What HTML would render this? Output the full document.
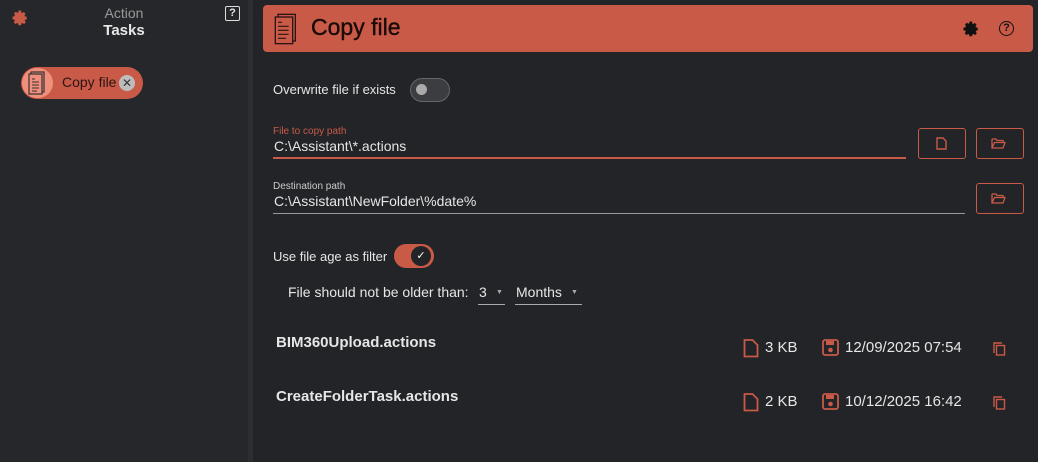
<html><head><style>
body{margin:0;width:1038px;height:462px;background:#222427;font-family:"Liberation Sans",sans-serif;position:relative;overflow:hidden;color:#e6e6e6}
.a{position:absolute}
.btn{position:absolute;border:1.5px solid #c95a48;border-radius:3px;box-sizing:border-box}
</style></head><body>
<div class="a" style="left:0;top:0;width:248px;height:462px;background:#25272a"></div>
<div class="a" style="left:248px;top:0;width:5px;height:462px;background:#2c2e31"></div>
<svg class="a" style="left:11px;top:9px" width="18" height="18" viewBox="0 0 24 24"><path fill="#c95a48" d="M12 8.5a3.5 3.5 0 1 0 0 7 3.5 3.5 0 0 0 0-7zm9 5.2v-3.4l-2.4-.5-.6-1.5 1.4-2-2.4-2.4-2 1.4-1.5-.6L13.7 2h-3.4l-.5 2.4-1.5.6-2-1.4-2.4 2.4 1.4 2-.6 1.5L2 10.3v3.4l2.4.5.6 1.5-1.4 2 2.4 2.4 2-1.4 1.5.6.5 2.4h3.4l.5-2.4 1.5-.6 2 1.4 2.4-2.4-1.4-2 .6-1.5z"/></svg>
<div class="a" style="left:0;width:248px;top:5px;text-align:center;font-size:14px;color:#9a9a9a">Action</div>
<div class="a" style="left:0;width:248px;top:22px;text-align:center;font-size:15px;font-weight:bold;color:#e8e8e8">Tasks</div>
<div class="a" style="left:225px;top:6px;width:13px;height:13px;border:1.5px solid #ddd;border-radius:2px;font-size:11px;font-weight:bold;text-align:center;line-height:13px">?</div>
<div class="a" style="left:21px;top:67px;width:122px;height:32px;border-radius:16px;background:#c95a48"></div>
<div class="a" style="left:22px;top:68px;width:31px;height:30px;border-radius:15px;background:#f0907c"></div>
<svg class="a" style="left:28px;top:71px" width="18" height="24" viewBox="0 0 18 24"><rect x="3" y="1" width="13" height="20" fill="none" stroke="#333" stroke-width="1.2"/><rect x="1" y="3" width="13" height="20" fill="#f0907c" stroke="#333" stroke-width="1.2"/><path d="M4 8h3M4 11h7M4 14h7M4 17h7M4 20h5" stroke="#333" stroke-width="1"/></svg>
<div class="a" style="left:62px;top:74px;font-size:14px;color:#2a1512">Copy file</div>
<div class="a" style="left:119px;top:75px;width:16px;height:16px;border-radius:8px;background:#bdbdbd;color:#333;font-size:12px;text-align:center;line-height:16px">✕</div>

<div class="a" style="left:263px;top:5px;width:770px;height:47px;background:#c95a48;border-radius:4px"></div>
<svg class="a" style="left:274px;top:13px" width="24" height="32" viewBox="0 0 18 24"><rect x="3" y="1" width="13" height="20" fill="none" stroke="#2a1512" stroke-width="1"/><rect x="1" y="3" width="13" height="20" fill="#c95a48" stroke="#2a1512" stroke-width="1"/><path d="M3 7h3M3 10h8M3 13h8M3 16h8M3 19h6" stroke="#2a1512" stroke-width=".9"/></svg>
<div class="a" style="left:311px;top:14px;font-size:23px;color:#1a0a08;-webkit-text-stroke:0.4px #1a0a08">Copy file</div>
<svg class="a" style="left:962px;top:20px" width="18" height="18" viewBox="0 0 24 24"><path fill="#111" d="M12 8.5a3.5 3.5 0 1 0 0 7 3.5 3.5 0 0 0 0-7zm9 5.2v-3.4l-2.4-.5-.6-1.5 1.4-2-2.4-2.4-2 1.4-1.5-.6L13.7 2h-3.4l-.5 2.4-1.5.6-2-1.4-2.4 2.4 1.4 2-.6 1.5L2 10.3v3.4l2.4.5.6 1.5-1.4 2 2.4 2.4 2-1.4 1.5.6.5 2.4h3.4l.5-2.4 1.5-.6 2 1.4 2.4-2.4-1.4-2 .6-1.5z"/></svg>
<div class="a" style="left:999px;top:21px;width:13px;height:13px;border:1.5px solid #111;border-radius:50%;font-size:11px;font-weight:bold;color:#111;text-align:center;line-height:13px">?</div>

<div class="a" style="left:273px;top:82px;font-size:13px">Overwrite file if exists</div>
<div class="a" style="left:410px;top:78px;width:38px;height:22px;border-radius:12px;background:#3b3d40;border:1px solid #666"></div>
<div class="a" style="left:416px;top:84px;width:11px;height:11px;border-radius:50%;background:#aaa"></div>

<div class="a" style="left:273px;top:126px;font-size:10px;color:#c95a48">File to copy path</div>
<div class="a" style="left:274px;top:138px;font-size:14px">C:\Assistant\*.actions</div>
<div class="a" style="left:273px;top:157px;width:633px;height:2px;background:#c95a48"></div>
<div class="btn" style="left:918px;top:128px;width:48px;height:31px"></div>
<svg class="a" style="left:936px;top:137px" width="11" height="13" viewBox="0 0 11 13"><path d="M1 1h6l3 3v8H1z" fill="none" stroke="#c95a48" stroke-width="1.4"/></svg>
<div class="btn" style="left:976px;top:128px;width:48px;height:31px"></div>
<svg class="a" style="left:991px;top:138px" width="15" height="11" viewBox="0 0 15 11"><path d="M1 1h4l1 1.5h6v2M1 1v9h11l2-5.5H3.5L1 10" fill="none" stroke="#c95a48" stroke-width="1.3"/></svg>

<div class="a" style="left:273px;top:181px;font-size:10px;color:#ccc">Destination path</div>
<div class="a" style="left:274px;top:193px;font-size:14px">C:\Assistant\NewFolder\%date%</div>
<div class="a" style="left:273px;top:213px;width:692px;height:1px;background:#999"></div>
<div class="btn" style="left:976px;top:183px;width:48px;height:31px"></div>
<svg class="a" style="left:991px;top:193px" width="15" height="11" viewBox="0 0 15 11"><path d="M1 1h4l1 1.5h6v2M1 1v9h11l2-5.5H3.5L1 10" fill="none" stroke="#c95a48" stroke-width="1.3"/></svg>

<div class="a" style="left:273px;top:249px;font-size:13px">Use file age as filter</div>
<div class="a" style="left:394px;top:244px;width:40px;height:24px;border-radius:12px;background:#c95a48"></div>
<div class="a" style="left:411px;top:246px;width:20px;height:20px;border-radius:50%;background:#222427;color:#fff;font-size:11px;text-align:center;line-height:20px">✓</div>
<div class="a" style="left:288px;top:284px;font-size:14px">File should not be older than:</div>
<div class="a" style="left:479px;top:284px;font-size:14px">3</div>
<div class="a" style="left:496px;top:289px;font-size:7px;color:#aaa">▼</div>
<div class="a" style="left:478px;top:304px;width:27px;height:1px;background:#aaa"></div>
<div class="a" style="left:516px;top:284px;font-size:14px">Months</div>
<div class="a" style="left:571px;top:289px;font-size:7px;color:#aaa">▼</div>
<div class="a" style="left:515px;top:304px;width:67px;height:1px;background:#aaa"></div>

<div class="a" style="left:276px;top:334px;font-size:15px;font-weight:bold">BIM360Upload.actions</div>
<div class="a" style="left:276px;top:388px;font-size:15px;font-weight:bold">CreateFolderTask.actions</div>

<svg class="a" style="left:743px;top:339px" width="16" height="19" viewBox="0 0 16 19"><path d="M1.5 1h8l5 5v11.5h-13z" fill="none" stroke="#c95a48" stroke-width="1.8"/></svg>
<div class="a" style="left:765px;top:339px;font-size:15px">3 KB</div>
<svg class="a" style="left:822px;top:339px" width="17" height="17" viewBox="0 0 17 17"><rect x="1" y="1" width="15" height="15" rx="2" fill="none" stroke="#c95a48" stroke-width="1.8"/><rect x="4" y="2" width="8" height="4" fill="#c95a48"/><circle cx="8.5" cy="11" r="2.3" fill="#c95a48"/></svg>
<div class="a" style="left:845px;top:339px;font-size:15px">12/09/2025 07:54</div>
<svg class="a" style="left:993px;top:342px" width="13" height="14" viewBox="0 0 13 14"><rect x="3.5" y="3.5" width="8" height="9.5" fill="none" stroke="#c95a48" stroke-width="1.4"/><path d="M1 11V1h8" fill="none" stroke="#c95a48" stroke-width="1.4"/></svg>

<svg class="a" style="left:743px;top:393px" width="16" height="19" viewBox="0 0 16 19"><path d="M1.5 1h8l5 5v11.5h-13z" fill="none" stroke="#c95a48" stroke-width="1.8"/></svg>
<div class="a" style="left:765px;top:393px;font-size:15px">2 KB</div>
<svg class="a" style="left:822px;top:393px" width="17" height="17" viewBox="0 0 17 17"><rect x="1" y="1" width="15" height="15" rx="2" fill="none" stroke="#c95a48" stroke-width="1.8"/><rect x="4" y="2" width="8" height="4" fill="#c95a48"/><circle cx="8.5" cy="11" r="2.3" fill="#c95a48"/></svg>
<div class="a" style="left:845px;top:393px;font-size:15px">10/12/2025 16:42</div>
<svg class="a" style="left:993px;top:396px" width="13" height="14" viewBox="0 0 13 14"><rect x="3.5" y="3.5" width="8" height="9.5" fill="none" stroke="#c95a48" stroke-width="1.4"/><path d="M1 11V1h8" fill="none" stroke="#c95a48" stroke-width="1.4"/></svg>
</body></html>
